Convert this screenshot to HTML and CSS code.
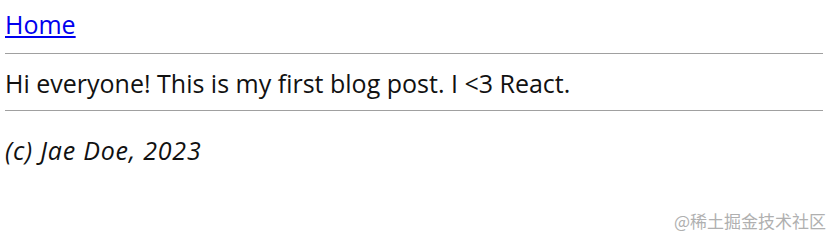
FILE: index.html
```html
<!DOCTYPE html>
<html lang="en">
<head>
<meta charset="utf-8">
<title>Blog</title>
<link rel="stylesheet" href="styles.css">
</head>
<body>
<nav class="nav"><a class="nav-link" href="#">Home</a></nav>
<hr class="rule">
<main class="post"><p class="post-text">Hi everyone! This is my first blog post. I &lt;3 React.</p></main>
<hr class="rule">
<footer class="footer"><p class="footer-text">(c) Jae Doe, 2023</p></footer>
<div class="watermark">@稀土掘金技术社区</div>
</body>
</html>
```
FILE: styles.css
```css
html, body {
  margin: 0;
  padding: 0;
  background: #fff;
}
body {
  padding: 0 9px 0 5px;
  font-family: "Open Sans", "Noto Sans", sans-serif;
  font-size: 25px;
  line-height: 34px;
  color: #111;
  position: relative;
  height: 240px;
  box-sizing: border-box;
  overflow: hidden;
}
.nav {
  padding: 7px 0 12px;
}
.nav-link {
  color: #0000ee;
  text-decoration: underline;
}
.rule {
  margin: 0;
  border: 0;
  border-top: 1px solid #a0a0a0;
  height: 0;
}
.post-text {
  margin: 0;
  padding: 12px 0 10px;
}
.footer-text {
  margin: 0;
  padding: 22px 0 0;
  font-style: italic;
  letter-spacing: 0.8px;
}
.watermark {
  position: absolute;
  right: 6px;
  bottom: 8px;
  font-family: "Noto Sans CJK SC", sans-serif;
  font-size: 17px;
  line-height: 22px;
  color: #b0b0b0;
}
```
